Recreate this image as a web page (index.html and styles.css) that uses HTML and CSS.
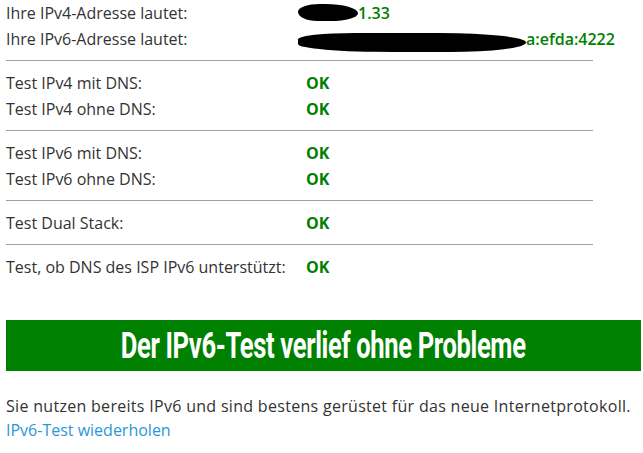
FILE: index.html
```html
<!DOCTYPE html>
<html lang="de">
<head>
    <meta charset="UTF-8">
    <title>IPv6-Test</title>
    <link rel="stylesheet" href="styles.css">
</head>
<body>
    <div class="container">
        <div class="group first">
            <div class="row">
                <span class="label">Ihre IPv4-Adresse lautet:</span>
                <span class="value ip"><span class="blot blot-v4"></span>1.33</span>
            </div>
            <div class="row">
                <span class="label">Ihre IPv6-Adresse lautet:</span>
                <span class="value ip"><span class="blot blot-v6"></span>a:efda:4222</span>
            </div>
        </div>

        <div class="group">
            <div class="row">
                <span class="label">Test IPv4 mit DNS:</span>
                <span class="value">OK</span>
            </div>
            <div class="row">
                <span class="label">Test IPv4 ohne DNS:</span>
                <span class="value">OK</span>
            </div>
        </div>

        <div class="group">
            <div class="row">
                <span class="label">Test IPv6 mit DNS:</span>
                <span class="value">OK</span>
            </div>
            <div class="row">
                <span class="label">Test IPv6 ohne DNS:</span>
                <span class="value">OK</span>
            </div>
        </div>

        <div class="group">
            <div class="row">
                <span class="label">Test Dual Stack:</span>
                <span class="value">OK</span>
            </div>
        </div>

        <div class="group last">
            <div class="row">
                <span class="label">Test, ob DNS des ISP IPv6 unterstützt:</span>
                <span class="value">OK</span>
            </div>
        </div>

        <div class="banner"><h2>Der IPv6-Test verlief ohne Probleme</h2></div>

        <p class="summary">Sie nutzen bereits IPv6 und sind bestens gerüstet für das neue Internetprotokoll.</p>
        <a class="retry" href="#">IPv6-Test wiederholen</a>
    </div>
</body>
</html>
```

FILE: styles.css
```css
body {
    margin: 0;
    font-family: 'Open Sans', 'Liberation Sans', sans-serif;
    font-size: 16px;
    color: #333;
    background: white;
    overflow: hidden;
}
.container {
    padding-left: 6px;
}
.group {
    width: 587px;
    padding: 9px 0 8px;
    border-bottom: 1px solid #a0a0a0;
}
.group.first {
    padding-top: 0;
}
.group.last {
    border-bottom: none;
}
.row {
    display: flex;
    height: 26px;
    line-height: 26px;
}
.label {
    width: 300px;
    flex-shrink: 0;
}
.value {
    color: #008000;
    font-weight: bold;
    white-space: nowrap;
}
.ip {
    font-weight: 600;
    margin-left: -8px;
}
.blot {
    display: inline-block;
    background: black;
    vertical-align: middle;
}
.blot-v4 {
    width: 60px;
    height: 17px;
    border-radius: 40% 60% 50% 35% / 50% 60% 50% 60%;
    margin-top: -4px;
}
.blot-v6 {
    width: 228px;
    height: 19px;
    border-radius: 30% 45% 40% 50% / 40% 60% 60% 50%;
    margin-top: 4px;
}
.banner {
    margin-top: 32px;
    width: 635px;
    height: 51px;
    background: #008000;
    display: flex;
    align-items: center;
    justify-content: center;
}
.banner h2 {
    margin: 0;
    color: white;
    font-family: Roboto, 'Liberation Sans', sans-serif;
    font-weight: 700;
    font-size: 36px;
    letter-spacing: -0.5px;
    transform: scaleX(0.71);
    white-space: nowrap;
}
.summary {
    margin: 23px 0 0;
    line-height: 24px;
    letter-spacing: 0.3px;
    white-space: nowrap;
}
.retry {
    display: block;
    line-height: 24px;
    color: #2a97d6;
    text-decoration: none;
}
```
